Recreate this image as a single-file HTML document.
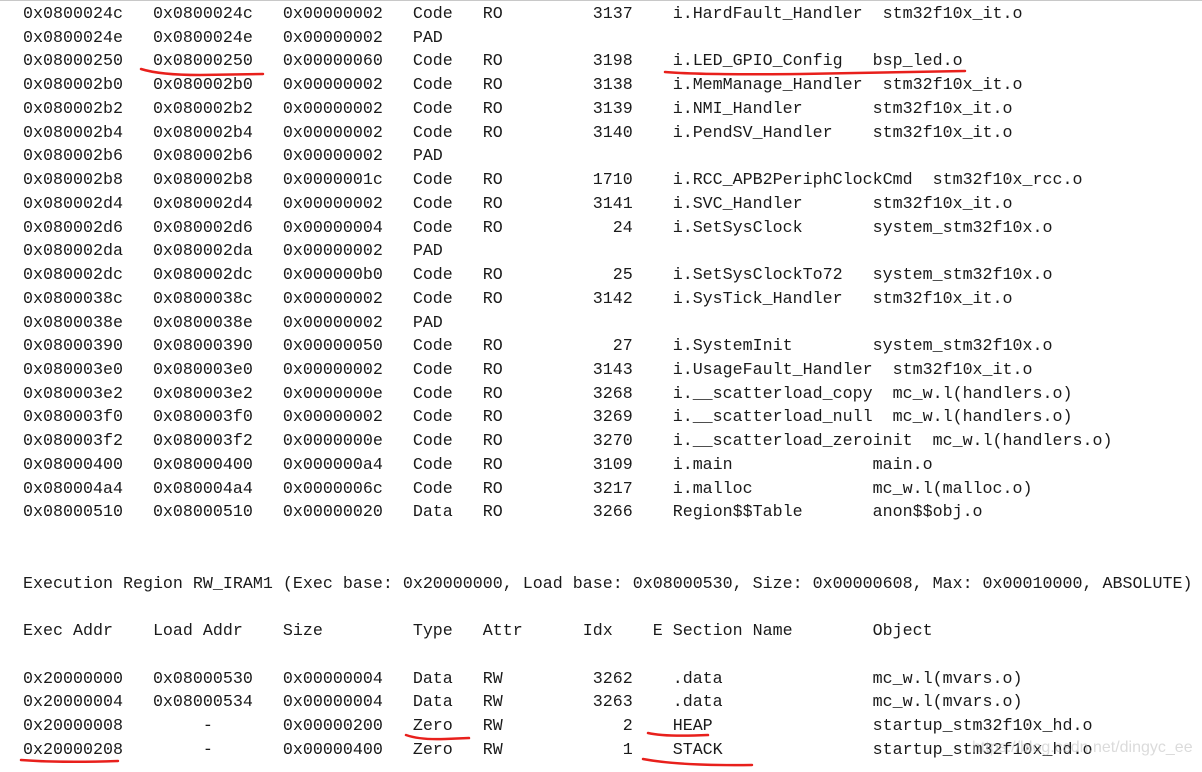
<!DOCTYPE html>
<html><head><meta charset="utf-8"><style>
html,body{margin:0;padding:0;background:#fff;width:1202px;height:772px;overflow:hidden;position:relative}
.top{position:absolute;left:0;top:0;width:1202px;height:1px;background:#c8c8c8}
pre{position:absolute;left:23px;top:3px;margin:0;font-family:"Liberation Mono","DejaVu Sans Mono",monospace;font-size:16.67px;line-height:23.74px;color:#1a1a1a}
svg{position:absolute;left:0;top:0}
.wm{position:absolute;left:972px;top:739px;font-family:"Liberation Sans",sans-serif;font-size:16px;color:rgba(190,190,190,0.55);white-space:nowrap}
</style></head><body>
<div class="top"></div>
<pre>0x0800024c   0x0800024c   0x00000002   Code   RO         3137    i.HardFault_Handler  stm32f10x_it.o
0x0800024e   0x0800024e   0x00000002   PAD
0x08000250   0x08000250   0x00000060   Code   RO         3198    i.LED_GPIO_Config   bsp_led.o
0x080002b0   0x080002b0   0x00000002   Code   RO         3138    i.MemManage_Handler  stm32f10x_it.o
0x080002b2   0x080002b2   0x00000002   Code   RO         3139    i.NMI_Handler       stm32f10x_it.o
0x080002b4   0x080002b4   0x00000002   Code   RO         3140    i.PendSV_Handler    stm32f10x_it.o
0x080002b6   0x080002b6   0x00000002   PAD
0x080002b8   0x080002b8   0x0000001c   Code   RO         1710    i.RCC_APB2PeriphClockCmd  stm32f10x_rcc.o
0x080002d4   0x080002d4   0x00000002   Code   RO         3141    i.SVC_Handler       stm32f10x_it.o
0x080002d6   0x080002d6   0x00000004   Code   RO           24    i.SetSysClock       system_stm32f10x.o
0x080002da   0x080002da   0x00000002   PAD
0x080002dc   0x080002dc   0x000000b0   Code   RO           25    i.SetSysClockTo72   system_stm32f10x.o
0x0800038c   0x0800038c   0x00000002   Code   RO         3142    i.SysTick_Handler   stm32f10x_it.o
0x0800038e   0x0800038e   0x00000002   PAD
0x08000390   0x08000390   0x00000050   Code   RO           27    i.SystemInit        system_stm32f10x.o
0x080003e0   0x080003e0   0x00000002   Code   RO         3143    i.UsageFault_Handler  stm32f10x_it.o
0x080003e2   0x080003e2   0x0000000e   Code   RO         3268    i.__scatterload_copy  mc_w.l(handlers.o)
0x080003f0   0x080003f0   0x00000002   Code   RO         3269    i.__scatterload_null  mc_w.l(handlers.o)
0x080003f2   0x080003f2   0x0000000e   Code   RO         3270    i.__scatterload_zeroinit  mc_w.l(handlers.o)
0x08000400   0x08000400   0x000000a4   Code   RO         3109    i.main              main.o
0x080004a4   0x080004a4   0x0000006c   Code   RO         3217    i.malloc            mc_w.l(malloc.o)
0x08000510   0x08000510   0x00000020   Data   RO         3266    Region$$Table       anon$$obj.o


Execution Region RW_IRAM1 (Exec base: 0x20000000, Load base: 0x08000530, Size: 0x00000608, Max: 0x00010000, ABSOLUTE)

Exec Addr    Load Addr    Size         Type   Attr      Idx    E Section Name        Object

0x20000000   0x08000530   0x00000004   Data   RW         3262    .data               mc_w.l(mvars.o)
0x20000004   0x08000534   0x00000004   Data   RW         3263    .data               mc_w.l(mvars.o)
0x20000008        -       0x00000200   Zero   RW            2    HEAP                startup_stm32f10x_hd.o
0x20000208        -       0x00000400   Zero   RW            1    STACK               startup_stm32f10x_hd.o</pre>
<div class="wm">https://blog.csdn.net/dingyc_ee</div>
<svg width="1202" height="772" fill="none" stroke="#e8201c" stroke-width="2.5" stroke-linecap="round">
<path d="M141 69 Q160 75 200 75 L263 74"/>
<path d="M665 72 Q700 75 800 74 L965 71"/>
<path d="M406 735 Q420 740 445 739 L469 738"/>
<path d="M21 760 Q60 763 118 761"/>
<path d="M648 733 Q665 737 708 735"/>
<path d="M643 759 Q680 766 752 765"/>
</svg>
</body></html>
